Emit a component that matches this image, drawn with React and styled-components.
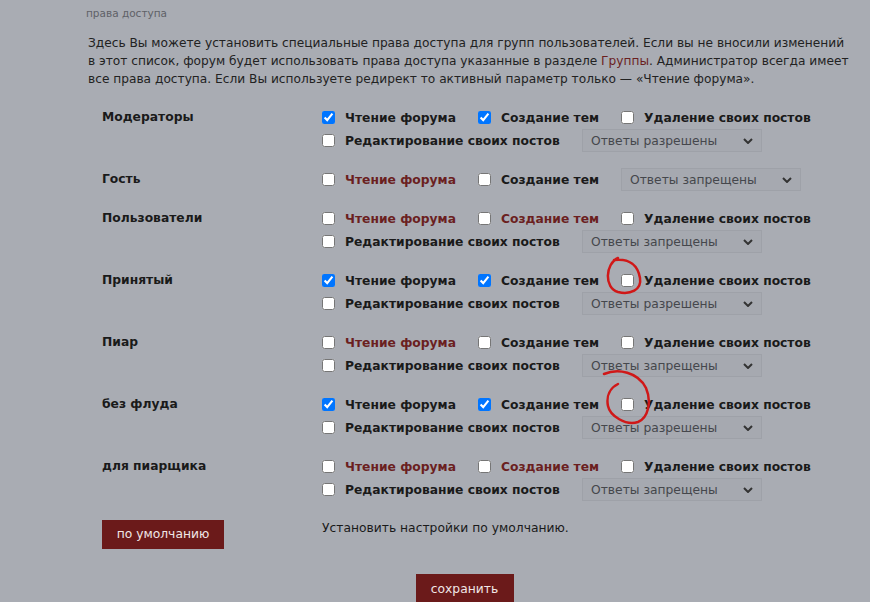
import React from 'react'
import styled, { createGlobalStyle } from 'styled-components'

const Global = createGlobalStyle`
  body { margin: 0; background: #a9acb3; font-family: "DejaVu Sans", Verdana, sans-serif; }
`

const groups = [
  { name: 'Модераторы', read: [true, 0], create: [true, 0], del: true, select: 'Ответы разрешены' },
  { name: 'Гость', read: [false, 1], create: [false, 0], del: null, select: 'Ответы запрещены' },
  { name: 'Пользователи', read: [false, 1], create: [false, 1], del: true, select: 'Ответы запрещены' },
  { name: 'Принятый', read: [true, 0], create: [true, 0], del: true, select: 'Ответы разрешены' },
  { name: 'Пиар', read: [false, 1], create: [false, 0], del: true, select: 'Ответы запрещены' },
  { name: 'без флуда', read: [true, 0], create: [true, 0], del: true, select: 'Ответы разрешены' },
  { name: 'для пиарщика', read: [false, 1], create: [false, 1], del: true, select: 'Ответы запрещены' },
]

const Sel = ({ children }) => (
  <Select>{children}<Chevron viewBox="0 0 10 6"><path d="M1 1l4 4 4-4" /></Chevron></Select>
)

export default function App() {
  return (
    <Page>
      <Global />
      <Legend>права доступа</Legend>
      <Intro>
        Здесь Вы можете установить специальные права доступа для групп пользователей. Если вы не вносили изменений<br />
        в этот список, форум будет использовать права доступа указанные в разделе <Link>Группы</Link>. Администратор всегда имеет<br />
        все права доступа. Если Вы используете редирект то активный параметр только — «Чтение форума».
      </Intro>
      <Table>
        {groups.map((g) => (
          <Row key={g.name}>
            <GroupName>{g.name}</GroupName>
            <Options>
              <Line>
                <Opt $w={156}><Box type="checkbox" defaultChecked={g.read[0]} /><Label $red={g.read[1]}>Чтение форума</Label></Opt>
                <Opt $w={143}><Box type="checkbox" defaultChecked={g.create[0]} /><Label $red={g.create[1]}>Создание тем</Label></Opt>
                {g.del !== null
                  ? <Opt><Box type="checkbox" /><Label>Удаление своих постов</Label></Opt>
                  : <Sel>{g.select}</Sel>}
              </Line>
              {g.del !== null && (
                <Line>
                  <Opt $w={260}><Box type="checkbox" /><Label>Редактирование своих постов</Label></Opt>
                  <Sel>{g.select}</Sel>
                </Line>
              )}
            </Options>
          </Row>
        ))}
        <Row>
          <GroupName><DarkButton>по умолчанию</DarkButton></GroupName>
          <Hint>Установить настройки по умолчанию.</Hint>
        </Row>
      </Table>
      <Footer><DarkButton $save>сохранить</DarkButton></Footer>
      <Scribble viewBox="0 0 60 60" style={{ left: 600, top: 250 }}>
        <path d="M18 8 C5 14 4 38 18 42 C30 45 42 40 40 28 C38 16 30 8 14 10" />
      </Scribble>
      <Scribble viewBox="0 0 60 60" style={{ left: 598, top: 366 }}>
        <path d="M6 8 C20 2 40 6 48 22 C54 36 50 52 40 56 C28 60 12 50 10 40 C8 30 12 22 20 18" />
      </Scribble>
    </Page>
  )
}

const Page = styled.div`
  position: relative;
  width: 870px;
  height: 602px;
  overflow: hidden;
  color: #1a1a1a;
`
const Legend = styled.div`
  padding: 7px 0 0 86px;
  font-size: 10.5px;
  color: #5f6167;
`
const Intro = styled.p`
  margin: 15px 0 0 88px;
  white-space: nowrap;
  font-size: 12.2px;
  line-height: 18px;
  color: #222;
`
const Link = styled.span`color: #6b1f1f;`
const Table = styled.div`
  margin: 18px 0 0 102px;
  display: flex;
  flex-direction: column;
  gap: 16px;
`
const Row = styled.div`
  display: flex;
  align-items: flex-start;
`
const GroupName = styled.div`
  width: 220px;
  font-size: 12.3px;
  font-weight: bold;
  line-height: 23px;
`
const Options = styled.div`
  display: flex;
  flex-direction: column;
`
const Line = styled.div`
  display: flex;
  align-items: center;
  height: 23px;
`
const Opt = styled.label`
  display: flex;
  align-items: center;
  gap: 10px;
  width: ${(p) => (p.$w ? `${p.$w}px` : 'auto')};
`
const Box = styled.input`
  margin: 0;
  width: 13px;
  height: 13px;
  accent-color: #0075ff;
`
const Label = styled.span`
  font-size: 12.3px;
  font-weight: bold;
  color: ${(p) => (p.$red ? '#6b1f1f' : '#1a1a1a')};
`
const Select = styled.div`
  box-sizing: border-box;
  width: 180px;
  height: 23px;
  padding: 0 8px;
  display: flex;
  align-items: center;
  justify-content: space-between;
  border: 1px solid #9ea1a8;
  background: #a6a9b0;
  font-size: 12.3px;
  color: #45474c;
`
const Chevron = styled.svg`
  width: 10px;
  height: 6px;
  fill: none;
  stroke: #333;
  stroke-width: 2;
`
const DarkButton = styled.div`
  display: inline-flex;
  align-items: center;
  justify-content: center;
  width: ${(p) => (p.$save ? '98px' : '122px')};
  height: ${(p) => (p.$save ? '30px' : '29px')};
  margin-top: ${(p) => (p.$save ? '0' : '3px')};
  background: #6b1a1a;
  color: #f0e6e6;
  font-size: 12.3px;
  font-weight: normal;
`
const Hint = styled.div`
  font-size: 12.3px;
  line-height: 23px;
`
const Footer = styled.div`
  display: flex;
  justify-content: center;
  padding-left: 59px;
  margin-top: 25px;
`
const Scribble = styled.svg`
  position: absolute;
  width: 60px;
  height: 60px;
  fill: none;
  stroke: #d01818;
  stroke-width: 2.5;
  stroke-linecap: round;
`
